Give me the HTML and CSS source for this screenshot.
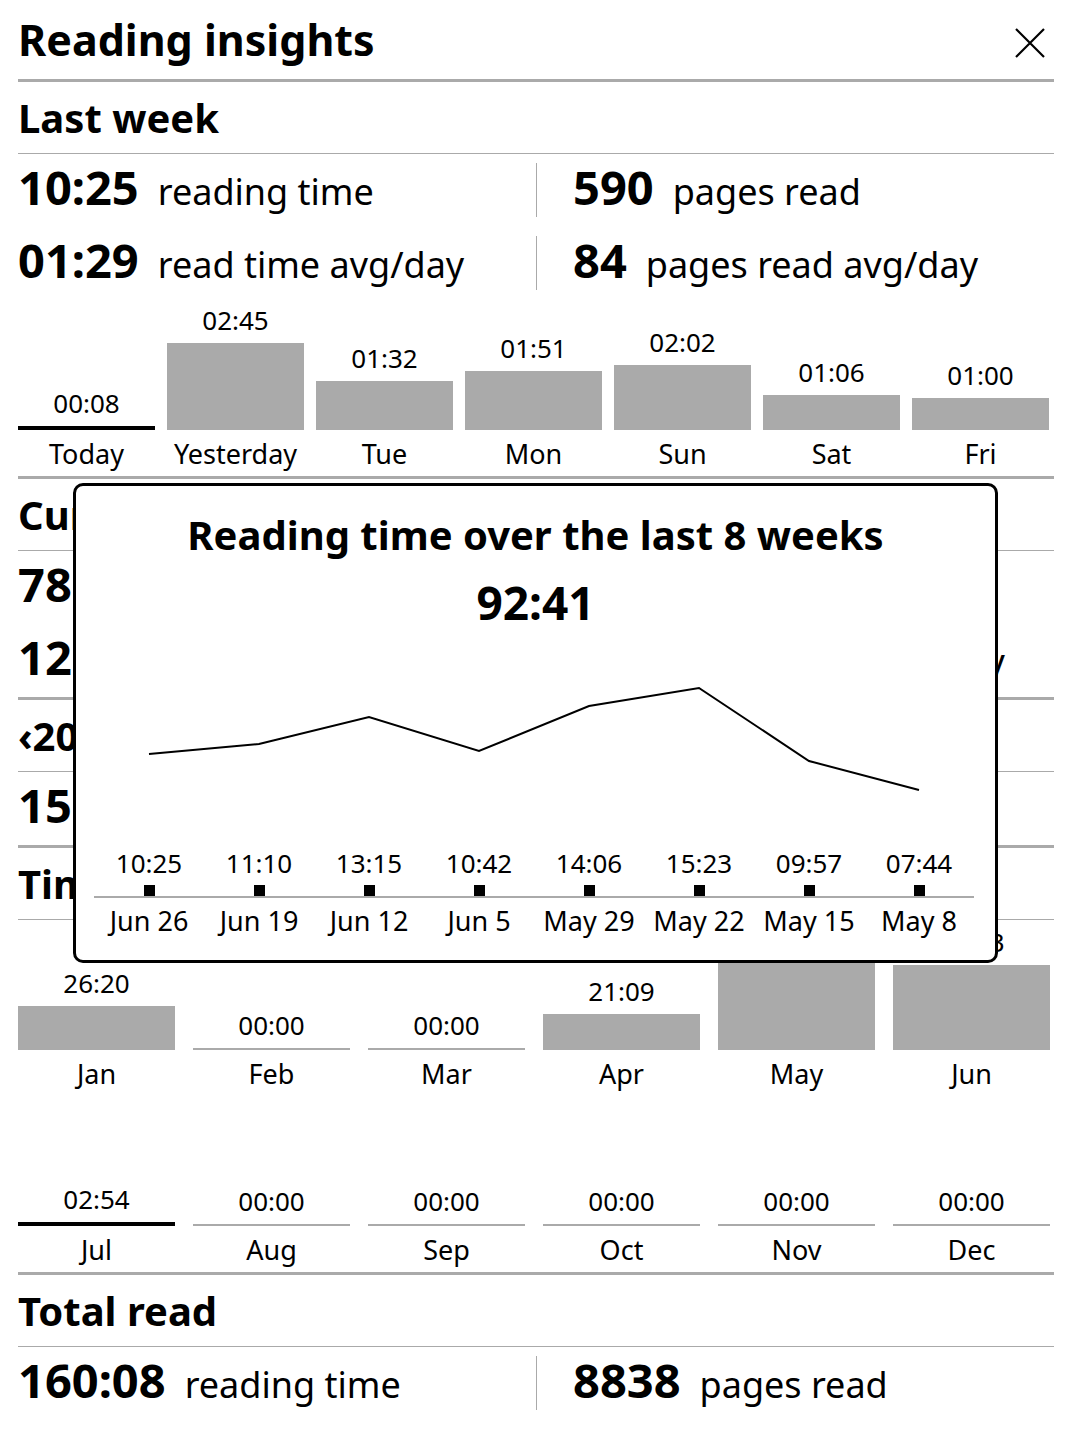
FILE: index.html
```html
<!DOCTYPE html>
<html>
<head lang="en">
    <meta charset="UTF-8">
    <title>Reading insights</title>
    <link rel="stylesheet" href="styles.css">
</head>
<body>
<div id="page">
    <div class="top">
        <h1>Reading insights</h1>
        <svg class="close" width="30" height="30" viewBox="0 0 30 30">
            <path d="M1 1L29 29M29 1L1 29" stroke="#000" stroke-width="2.2" fill="none"/>
        </svg>
    </div>

    <div class="block">
        <h2>Last week</h2>
        <div class="stats">
            <div class="stat"><b>10:25</b><span>reading time</span></div>
            <div class="stat"><b>590</b><span>pages read</span></div>
        </div>
        <div class="stats">
            <div class="stat"><b>01:29</b><span>read time avg/day</span></div>
            <div class="stat"><b>84</b><span>pages read avg/day</span></div>
        </div>
        <div class="bars week">
            <div class="col"><div class="plot"><span class="val">00:08</span><i class="bar now" style="height:4px"></i></div><span class="lbl">Today</span></div>
            <div class="col"><div class="plot"><span class="val">02:45</span><i class="bar" style="height:87px"></i></div><span class="lbl">Yesterday</span></div>
            <div class="col"><div class="plot"><span class="val">01:32</span><i class="bar" style="height:49px"></i></div><span class="lbl">Tue</span></div>
            <div class="col"><div class="plot"><span class="val">01:51</span><i class="bar" style="height:59px"></i></div><span class="lbl">Mon</span></div>
            <div class="col"><div class="plot"><span class="val">02:02</span><i class="bar" style="height:65px"></i></div><span class="lbl">Sun</span></div>
            <div class="col"><div class="plot"><span class="val">01:06</span><i class="bar" style="height:35px"></i></div><span class="lbl">Sat</span></div>
            <div class="col"><div class="plot"><span class="val">01:00</span><i class="bar" style="height:32px"></i></div><span class="lbl">Fri</span></div>
        </div>
    </div>

    <div class="block">
        <h2>Current book</h2>
        <div class="stats">
            <div class="stat"><b>78:40</b><span>reading time</span></div>
            <div class="stat"><b>3412</b><span>pages read</span></div>
        </div>
        <div class="stats">
            <div class="stat"><b>12:06</b><span>read time avg/day</span></div>
            <div class="stat"><b>284</b><span>pages read avg/day</span></div>
        </div>
    </div>

    <div class="block">
        <h2>&lsaquo;2023&rsaquo;</h2>
        <div class="stats">
            <div class="stat"><b>155:17</b><span>reading time</span></div>
            <div class="stat"><b>8421</b><span>pages read</span></div>
        </div>
    </div>

    <div class="block">
        <h2>Time read per month</h2>
        <div class="bars months">
            <div class="col"><div class="plot"><span class="val">26:20</span><i class="bar" style="height:44px"></i></div><span class="lbl">Jan</span></div>
            <div class="col"><div class="plot"><span class="val">00:00</span><i class="bar" style="height:2px"></i></div><span class="lbl">Feb</span></div>
            <div class="col"><div class="plot"><span class="val">00:00</span><i class="bar" style="height:2px"></i></div><span class="lbl">Mar</span></div>
            <div class="col"><div class="plot"><span class="val">21:09</span><i class="bar" style="height:36px"></i></div><span class="lbl">Apr</span></div>
            <div class="col"><div class="plot"><span class="val">53:51</span><i class="bar" style="height:90px"></i></div><span class="lbl">May</span></div>
            <div class="col"><div class="plot"><span class="val">51:03</span><i class="bar" style="height:85px"></i></div><span class="lbl">Jun</span></div>
        </div>
        <div class="bars months">
            <div class="col"><div class="plot"><span class="val">02:54</span><i class="bar now" style="height:4px"></i></div><span class="lbl">Jul</span></div>
            <div class="col"><div class="plot"><span class="val">00:00</span><i class="bar" style="height:2px"></i></div><span class="lbl">Aug</span></div>
            <div class="col"><div class="plot"><span class="val">00:00</span><i class="bar" style="height:2px"></i></div><span class="lbl">Sep</span></div>
            <div class="col"><div class="plot"><span class="val">00:00</span><i class="bar" style="height:2px"></i></div><span class="lbl">Oct</span></div>
            <div class="col"><div class="plot"><span class="val">00:00</span><i class="bar" style="height:2px"></i></div><span class="lbl">Nov</span></div>
            <div class="col"><div class="plot"><span class="val">00:00</span><i class="bar" style="height:2px"></i></div><span class="lbl">Dec</span></div>
        </div>
    </div>

    <div class="block last">
        <h2>Total read</h2>
        <div class="stats">
            <div class="stat"><b>160:08</b><span>reading time</span></div>
            <div class="stat"><b>8838</b><span>pages read</span></div>
        </div>
    </div>

    <!-- popup over the page -->
    <div class="popup">
        <h3>Reading time over the last 8 weeks</h3>
        <div class="total">92:41</div>
        <svg class="trend" width="880" height="218" viewBox="0 0 880 218">
            <polyline points="55,124 165,114 275,87 385,121 495,76 605,58 715,131 825,160" fill="none" stroke="#000" stroke-width="2"/>
        </svg>
        <div class="wk wk-vals">
            <span>10:25</span><span>11:10</span><span>13:15</span><span>10:42</span>
            <span>14:06</span><span>15:23</span><span>09:57</span><span>07:44</span>
        </div>
        <div class="wk wk-ticks">
            <i></i><i></i><i></i><i></i><i></i><i></i><i></i><i></i>
        </div>
        <div class="wk wk-dates">
            <span>Jun 26</span><span>Jun 19</span><span>Jun 12</span><span>Jun 5</span>
            <span>May 29</span><span>May 22</span><span>May 15</span><span>May 8</span>
        </div>
    </div>
</div>
</body>
</html>
```

FILE: styles.css
```css
*{
    margin: 0;
    padding: 0;
    box-sizing: border-box;
}
body{
    font-family: "Noto Sans", "Open Sans", sans-serif;
    color: #000;
    background: #fff;
}
#page{
    width: 1072px;
    padding: 0 18px;
    position: relative;
}
.top{
    height: 82px;
    display: flex;
    align-items: center;
    justify-content: space-between;
    border-bottom: 3px solid #aaa;
    padding-right: 9px;
}
.top h1{
    font-size: 43px;
    font-weight: 700;
    line-height: 1;
}
.close{
    display: block;
    margin-top: 6px;
}
.block{
    border-bottom: 3px solid #aaa;
}
.block.last{
    border-bottom: 0;
}
.block h2{
    height: 72px;
    display: flex;
    align-items: center;
    border-bottom: 1px solid #aaa;
    font-size: 40px;
    font-weight: 700;
}
.stats{
    display: grid;
    grid-template-columns: 1fr 1fr;
    height: 73px;
}
.stat{
    display: flex;
    align-items: baseline;
    height: 54px;
    margin: 9px 0;
    white-space: nowrap;
}
.stat + .stat{
    border-left: 1px solid #aaa;
    padding-left: 36px;
}
.stat b{
    font-size: 47px;
    line-height: 48px;
    font-weight: 700;
}
.stat span{
    font-size: 36px;
    line-height: 48px;
    margin-left: 19px;
}
.bars{
    display: grid;
    height: 176px;
}
.week{
    grid-template-columns: repeat(7, 137px);
    column-gap: 12px;
}
.months{
    grid-template-columns: repeat(6, 157px);
    column-gap: 18px;
}
.col{
    display: flex;
    flex-direction: column;
    text-align: center;
}
.plot{
    height: 130px;
    display: flex;
    flex-direction: column;
    justify-content: flex-end;
}
.val{
    font-size: 26px;
    line-height: 30px;
    margin-bottom: 8px;
}
.bar{
    display: block;
    background: #aaa;
}
.bar.now{
    background: #000;
}
.lbl{
    font-size: 27px;
    line-height: 42px;
    padding-top: 3px;
}
.popup{
    position: absolute;
    top: 483px;
    left: 73px;
    width: 925px;
    height: 480px;
    background: #fff;
    border: 3px solid #000;
    border-radius: 10px;
    padding-top: 25px;
}
.popup h3{
    font-size: 40px;
    line-height: 48px;
    font-weight: 700;
    text-align: center;
}
.total{
    font-size: 46px;
    line-height: 56px;
    font-weight: 700;
    text-align: center;
    margin-top: 15px;
}
.trend{
    display: block;
    margin-left: 18px;
}
.wk{
    display: grid;
    grid-template-columns: repeat(8, 110px);
    width: 880px;
    margin-left: 18px;
    text-align: center;
}
.wk-vals{
    font-size: 26px;
    line-height: 30px;
}
.wk-ticks{
    height: 20px;
    align-items: end;
    border-bottom: 2px solid #aaa;
}
.wk-ticks i{
    width: 11px;
    height: 11px;
    background: #000;
    justify-self: center;
}
.wk-dates{
    font-size: 27px;
    line-height: 31px;
    margin-top: 7px;
}
```
